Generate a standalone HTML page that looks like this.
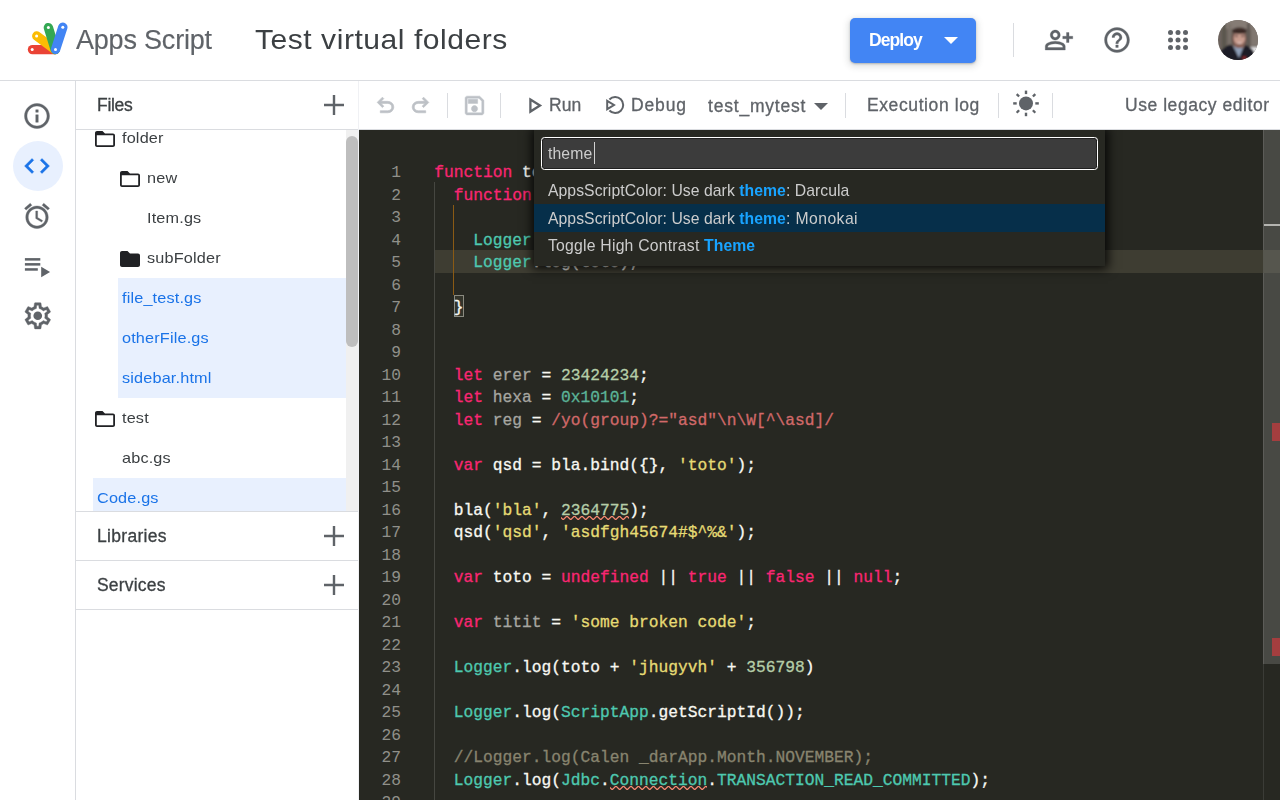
<!DOCTYPE html>
<html><head><meta charset="utf-8"><title>Test virtual folders - Apps Script</title>
<style>
*{box-sizing:border-box;margin:0;padding:0}
html,body{width:1280px;height:800px;overflow:hidden;background:#fff;font-family:"Liberation Sans",sans-serif;color:#3c4043}
.abs{position:absolute}
#hdr{position:absolute;left:0;top:0;width:1280px;height:80px;background:#fff}
#hdr .t,#files .t,#tb .t,#pal .t{will-change:transform}
#hline{position:absolute;left:0;top:80px;width:1280px;height:1px;background:#dadce0}
.t{position:absolute;white-space:nowrap;line-height:1}
svg{position:absolute;overflow:visible}
#nav{position:absolute;left:0;top:81px;width:75px;height:719px;background:#fff}
#navline{position:absolute;left:75px;top:81px;width:1px;height:719px;background:#dadce0}
#files{position:absolute;left:76px;top:81px;width:282px;height:719px;background:#fff;overflow:hidden}
#filesline{position:absolute;left:358px;top:81px;width:1px;height:719px;background:#f0f1f4}
.sec{position:absolute;left:0;width:282px;height:1px;background:#dadce0}
.row{position:absolute;height:40px;font-size:15px;line-height:40px;white-space:nowrap;color:#3c4043;letter-spacing:.15px;transform:scaleX(1.083);transform-origin:0 0}
.hl{position:absolute;background:#e8f0fe;height:40px}
.blue{color:#1a73e8}
#tb{position:absolute;left:359px;top:81px;width:921px;height:48px;background:#fff}
#tbline{position:absolute;left:359px;top:129px;width:921px;height:1px;background:#dadce0}
.vd{position:absolute;width:1px;background:#dadce0}
.tt{font-size:17.5px;color:#5f6368;-webkit-text-stroke:.3px #5f6368}
#ed{position:absolute;left:359px;top:130px;width:921px;height:670px;background:#272822;overflow:hidden;font-family:"Liberation Mono",monospace;font-size:16.25px;color:#f8f8f2}
.ln{position:absolute;left:0;width:42px;text-align:right;color:#90908a;height:22.5px;line-height:22.5px;white-space:pre}
.cl{position:absolute;left:75.2px;height:22.5px;line-height:22.5px;white-space:pre;-webkit-text-stroke:.3px}
.k{color:#f92672}.s{color:#e6db74}.n{color:#b5cea8}.ty{color:#4ec9b0}.c{color:#88846f}.u{color:#a6a6a1}.re{color:#d16969}.hx{color:#5bb498}
.pr b{color:#18a3ff;font-weight:bold}
</style></head><body>
<div id="hdr">
<svg width="60" height="50" style="left:20px;top:15px" viewBox="20 15 60 50">
 <g fill="none" stroke-linecap="round" stroke-width="9.400" style="filter:blur(.35px)">
  <line x1="32.5" y1="49.6" x2="55" y2="49.6" stroke="#ea4335"/>
  <line x1="36.8" y1="36" x2="55" y2="49.6" stroke="#fbbc04"/>
  <line x1="48.4" y1="27.6" x2="55.2" y2="49.6" stroke="#34a853"/>
  <line x1="62.8" y1="27.2" x2="55.6" y2="49.4" stroke="#4285f4"/>
 </g>
 <g fill="#fff"><circle cx="32.2" cy="49.6" r="1.5"/><circle cx="36.6" cy="36" r="1.5"/><circle cx="48.4" cy="27.6" r="1.5"/><circle cx="62.8" cy="27.3" r="1.5"/><circle cx="55.5" cy="49.5" r="1.5"/></g>
</svg>
<div class="t" id="t_apps" style="left:76px;top:27px;font-size:27px;color:#5f6368;letter-spacing:-0.2px;-webkit-text-stroke:.15px">Apps Script</div>
<div class="t" id="t_title" style="left:254.500px;top:25px;font-size:28.300px;color:#3c4043;letter-spacing:.5px;transform:scaleX(1.062);transform-origin:0 0">Test virtual folders</div>
<div class="abs" id="deploy" style="left:850px;top:18px;width:126px;height:45px;border-radius:5px;background:#4285f4;box-shadow:0 1px 2px rgba(60,64,67,.3),0 2px 6px 2px rgba(60,64,67,.15)"></div>
<div class="t" id="t_deploy" style="left:869px;top:31.600px;font-size:17.5px;font-weight:bold;color:#fff;letter-spacing:-0.9px">Deploy</div>
<svg width="14" height="7" style="left:943.5px;top:37px" viewBox="0 0 14 7"><path d="M0 0h14L7 7z" fill="#fff"/></svg>
<div class="vd" style="left:1013px;top:23px;height:34px"></div>
<svg width="30" height="30" style="left:1044px;top:25px" viewBox="0 0 24 24"><path fill="#5f6368" stroke="#5f6368" stroke-width=".25" d="M20 9V6h-2v3h-3v2h3v3h2v-3h3V9h-3zM9 12c2.21 0 4-1.79 4-4s-1.79-4-4-4-4 1.79-4 4 1.79 4 4 4zm0-6c1.1 0 2 .9 2 2s-.9 2-2 2-2-.9-2-2 .9-2 2-2zm6.39 8.56C13.71 13.7 11.53 13 9 13s-4.71.7-6.39 1.56C1.61 15.07 1 16.1 1 17.22V20h16v-2.78c0-1.12-.61-2.15-1.61-2.66zM15 18H3v-.78c0-.38.2-.72.52-.88C4.71 15.73 6.63 15 9 15c2.37 0 4.29.73 5.48 1.34.32.16.52.5.52.88V18z"/></svg>
<svg width="30" height="30" style="left:1102px;top:25px" viewBox="0 0 24 24"><path fill="#5f6368" stroke="#5f6368" stroke-width=".25" d="M11 18h2v-2h-2v2zm1-16C6.48 2 2 6.48 2 12s4.48 10 10 10 10-4.48 10-10S17.52 2 12 2zm0 18c-4.41 0-8-3.59-8-8s3.59-8 8-8 8 3.59 8 8-3.59 8-8 8zm0-14c-2.21 0-4 1.79-4 4h2c0-1.1.9-2 2-2s2 .9 2 2c0 2-3 1.75-3 5h2c0-2.25 3-2.5 3-5 0-2.21-1.79-4-4-4z"/></svg>
<svg width="30" height="30" style="left:1163px;top:25px" viewBox="0 0 24 24"><g fill="#5f6368"><circle cx="6" cy="6" r="2"/><circle cx="12" cy="6" r="2"/><circle cx="18" cy="6" r="2"/><circle cx="6" cy="12" r="2"/><circle cx="12" cy="12" r="2"/><circle cx="18" cy="12" r="2"/><circle cx="6" cy="18" r="2"/><circle cx="12" cy="18" r="2"/><circle cx="18" cy="18" r="2"/></g></svg>
<svg width="40" height="40" style="left:1218px;top:20px" viewBox="0 0 40 40">
 <defs><clipPath id="av"><circle cx="20" cy="20" r="20"/></clipPath>
 <filter id="bl" x="-20%" y="-20%" width="140%" height="140%"><feGaussianBlur stdDeviation="1"/></filter></defs>
 <g clip-path="url(#av)"><rect width="40" height="40" fill="#6b625c"/>
 <g filter="url(#bl)">
  <rect x="-4" y="-4" width="48" height="13" fill="#857b74"/>
  <rect x="4" y="2" width="4" height="26" fill="#5a574d"/>
  <rect x="10" y="4" width="3" height="22" fill="#7a726b"/>
  <rect x="29" y="3" width="3" height="24" fill="#5f5952"/>
  <rect x="33" y="6" width="8" height="20" fill="#80776f"/>
  <rect x="30" y="27" width="12" height="7" fill="#e6e6e8"/>
  <path d="M1 42 L3 31 Q8 25 13 24.500 L21 34 L27.500 25 Q34 27 36.500 33 L39 44 Z" fill="#1e1b25"/>
  <path d="M15.500 26.500 L21 38 L25.500 26.500z" fill="#8e9fb8"/>
  <ellipse cx="21.200" cy="18.500" rx="7.200" ry="9.300" fill="#6a4a42"/>
  <ellipse cx="21.400" cy="18.200" rx="5.800" ry="7.200" fill="#c89c8e"/>
  <ellipse cx="21.300" cy="25.500" rx="4.600" ry="2.600" fill="#8a6256"/>
  <ellipse cx="21.500" cy="23" rx="2.400" ry="1" fill="#e0c4bc"/>
  <ellipse cx="21.500" cy="10.800" rx="7.300" ry="3.300" fill="#3a2a27"/>
  <rect x="17" y="15.500" width="3" height="1.200" fill="#4a3530"/><rect x="23" y="15.500" width="3" height="1.200" fill="#4a3530"/>
  <rect x="24.500" y="36.500" width="3.500" height="3" fill="#8e2a2a"/>
 </g></g>
</svg>
</div><div id="hline"></div>
<div id="nav">
<div class="abs" style="left:13px;top:60px;width:50px;height:50px;border-radius:25px;background:#e8f0fe"></div>
<svg width="30" height="30" style="left:22.100px;top:20px" viewBox="0 0 24 24"><path fill="#5f6368" stroke="#5f6368" stroke-width=".3" d="M11 7h2v2h-2zm0 4h2v6h-2zm1-9C6.48 2 2 6.48 2 12s4.48 10 10 10 10-4.48 10-10S17.52 2 12 2zm0 18c-4.41 0-8-3.590-8-8s3.590-8 8-8 8 3.590 8 8-3.590 8-8 8z"/></svg>
<svg width="30" height="30" style="left:22.300px;top:70px" viewBox="0 0 24 24"><path fill="#1a73e8" stroke="#1a73e8" stroke-width=".3" d="M9.4 16.6L4.8 12l4.6-4.6L8 6l-6 6 6 6 1.4-1.4zm5.200 0l4.600-4.600-4.600-4.600L16 6l6 6-6 6-1.400-1.400z"/></svg>
<svg width="30" height="30" style="left:22.300px;top:120px" viewBox="0 0 24 24"><path fill="#5f6368" stroke="#5f6368" stroke-width=".3" d="M22 5.72l-4.6-3.86-1.29 1.53 4.6 3.86L22 5.72zM7.88 3.39L6.6 1.86 2 5.71l1.29 1.53 4.59-3.85zM12.5 8H11v6l4.75 2.850.750-1.230-4-2.370V8zM12 4c-4.970 0-9 4.030-9 9s4.020 9 9 9c4.970 0 9-4.030 9-9s-4.030-9-9-9zm0 16c-3.870 0-7-3.130-7-7s3.130-7 7-7 7 3.130 7 7-3.130 7-7 7z"/></svg>
<svg width="30" height="24" style="left:24px;top:175px" viewBox="24 256 30 24"><g fill="#5f6368"><rect x="24.9" y="258.100" width="15.400" height="2.500"/><rect x="24.900" y="263.100" width="15.400" height="2.500"/><rect x="24.900" y="268.200" width="12.900" height="2.500"/><path d="M41.200 266.800v10.400l8.900-5.200z"/></g></svg>
<svg width="31.500" height="31.500" style="left:21.900px;top:219.300px" viewBox="0 0 24 24"><path fill="#5f6368" stroke="#5f6368" stroke-width=".3" d="M19.43 12.98c.04-.32.07-.64.07-.98 0-.34-.03-.66-.07-.98l2.11-1.65c.19-.15.24-.42.12-.64l-2-3.46c-.09-.16-.26-.25-.44-.25-.06 0-.12.01-.17.03l-2.49 1c-.52-.4-1.08-.73-1.69-.98l-.38-2.65C14.46 2.18 14.25 2 14 2h-4c-.25 0-.46.18-.49.42l-.38 2.65c-.61.25-1.17.59-1.69.98l-2.49-1c-.06-.02-.12-.03-.18-.03-.17 0-.34.09-.43.25l-2 3.46c-.13.22-.07.49.12.64l2.11 1.65c-.04.32-.07.65-.07.98 0 .33.03.66.07.98l-2.11 1.65c-.19.15-.24.42-.12.64l2 3.46c.09.16.26.25.44.25.06 0 .12-.01.17-.03l2.49-1c.52.4 1.08.73 1.69.98l.38 2.65c.03.24.24.42.49.42h4c.25 0 .46-.18.49-.42l.38-2.65c.61-.25 1.17-.59 1.69-.98l2.49 1c.06.02.12.03.18.03.17 0 .34-.09.43-.25l2-3.46c.12-.22.07-.49-.12-.64l-2.11-1.65zm-1.98-1.71c.04.31.05.52.05.73 0 .21-.02.43-.05.73l-.14 1.13.89.7 1.08.84-.7 1.21-1.27-.51-1.04-.42-.9.68c-.43.32-.84.56-1.25.73l-1.06.43-.16 1.13-.2 1.35h-1.4l-.19-1.35-.16-1.13-1.06-.43c-.43-.18-.83-.41-1.23-.71l-.91-.7-1.06.43-1.27.51-.7-1.21 1.08-.84.89-.7-.14-1.13c-.03-.31-.05-.54-.05-.74s.02-.43.05-.73l.14-1.13-.89-.7-1.08-.84.7-1.21 1.27.51 1.04.42.9-.68c.43-.32.84-.56 1.25-.73l1.06-.43.16-1.13.2-1.35h1.39l.19 1.35.16 1.13 1.06.43c.43.18.83.41 1.23.71l.91.7 1.06-.43 1.27-.51.7 1.21-1.07.85-.89.7.14 1.13z"/><circle cx="12" cy="12" r="3.300" fill="#5f6368"/></svg>
</div><div id="navline"></div>
<div id="files">
<div class="hl" style="left:42px;top:197px;width:228px;height:120px"></div>
<div class="hl" style="left:17px;top:397px;width:253px;height:40px"></div>
<svg width="20" height="16" style="left:19px;top:49.6px" viewBox="0 0 20 16"><path fill="#202124" d="M7.5 0l2.500 2.500h8c1.100 0 2 .9 2 2V14c0 1.100-.9 2-2 2H2c-1.100 0-2-.9-2-2V2C0 .9.900 0 2 0h5.500zM1.800 4.300V14.200h16.400V4.300H1.800z"/></svg>
<div class="row" id="r0" style="left:46px;top:37.1px">folder</div>
<svg width="20" height="16" style="left:44px;top:89.6px" viewBox="0 0 20 16"><path fill="#202124" d="M7.5 0l2.500 2.500h8c1.100 0 2 .9 2 2V14c0 1.100-.9 2-2 2H2c-1.100 0-2-.9-2-2V2C0 .9.900 0 2 0h5.500zM1.800 4.300V14.200h16.400V4.300H1.800z"/></svg>
<div class="row" id="r1" style="left:71px;top:77.1px">new</div>
<div class="row" id="r2" style="left:71.3px;top:117.1px">Item.gs</div>
<svg width="20" height="16" style="left:44px;top:169.6px" viewBox="0 0 20 16"><path fill="#202124" d="M7.5 0l2.500 2.500h8c1.100 0 2 .9 2 2V14c0 1.100-.9 2-2 2H2c-1.100 0-2-.9-2-2V2C0 .9.900 0 2 0h5.500z"/></svg>
<div class="row" id="r3" style="left:71px;top:157.1px">subFolder</div>
<div class="row blue" id="r4" style="left:46.3px;top:197.1px">file_test.gs</div>
<div class="row blue" id="r5" style="left:46.3px;top:237.1px">otherFile.gs</div>
<div class="row blue" id="r6" style="left:46.3px;top:277.1px">sidebar.html</div>
<svg width="20" height="16" style="left:19px;top:329.6px" viewBox="0 0 20 16"><path fill="#202124" d="M7.5 0l2.500 2.500h8c1.100 0 2 .9 2 2V14c0 1.100-.9 2-2 2H2c-1.100 0-2-.9-2-2V2C0 .9.900 0 2 0h5.500zM1.800 4.300V14.200h16.400V4.300H1.800z"/></svg>
<div class="row" id="r7" style="left:46px;top:317.1px">test</div>
<div class="row" id="r8" style="left:46.3px;top:357.1px">abc.gs</div>
<div class="row blue" id="r9" style="left:21.3px;top:397.1px">Code.gs</div>
<div class="abs" style="left:270px;top:49px;width:12px;height:382px;background:#f0f0f0"></div>
<div class="abs" style="left:270px;top:55px;width:12px;height:211px;border-radius:6px;background:#bebebe"></div>
<div class="abs" style="left:0;top:0;width:282px;height:48px;background:#fff"></div>
<div class="sec" style="top:48px"></div>
<div class="abs" style="left:0;top:430px;width:282px;height:289px;background:#fff"></div>
<div class="sec" style="top:430px"></div><div class="sec" style="top:479px"></div><div class="sec" style="top:528px"></div>
<div class="t" id="t_files" style="left:21px;top:15.5px;font-size:17.5px;color:#3c4043;letter-spacing:-.3px;-webkit-text-stroke:.3px">Files</div>
<div class="t" id="t_libs" style="left:20.5px;top:446.500px;font-size:17.5px;color:#3c4043;letter-spacing:.3px;-webkit-text-stroke:.3px">Libraries</div>
<div class="t" id="t_serv" style="left:21px;top:495.500px;font-size:17.5px;color:#3c4043;letter-spacing:.2px;-webkit-text-stroke:.3px">Services</div>
<svg width="20" height="20" style="left:248px;top:14px" viewBox="0 0 20 20"><path d="M10 0v20M0 10h20" stroke="#5f6368" stroke-width="2.4" fill="none"/></svg><svg width="20" height="20" style="left:248px;top:445px" viewBox="0 0 20 20"><path d="M10 0v20M0 10h20" stroke="#5f6368" stroke-width="2.4" fill="none"/></svg><svg width="20" height="20" style="left:248px;top:494px" viewBox="0 0 20 20"><path d="M10 0v20M0 10h20" stroke="#5f6368" stroke-width="2.4" fill="none"/></svg>
</div><div id="filesline"></div>
<div id="tb">
<svg width="25" height="25" style="left:13.5px;top:11.5px" viewBox="0 0 24 24"><path fill="#bdc1c6" stroke="#bdc1c6" stroke-width=".6" d="M7 19v-2h7.1q1.575 0 2.738-1T18 13.5 16.837 11 14.1 10H7.8l2.6 2.6L9 14 4 9l5-5 1.4 1.4L7.8 8h6.3q2.425 0 4.163 1.575T20 13.5t-1.738 3.925T14.1 19z"/></svg>
<svg width="25" height="25" style="left:48.60000000000002px;top:11.5px" viewBox="0 0 24 24"><path fill="#bdc1c6" stroke="#bdc1c6" stroke-width=".6" transform="translate(24 0) scale(-1 1)" d="M7 19v-2h7.1q1.575 0 2.738-1T18 13.5 16.837 11 14.1 10H7.8l2.6 2.6L9 14 4 9l5-5 1.4 1.4L7.8 8h6.3q2.425 0 4.163 1.575T20 13.5t-1.738 3.925T14.1 19z"/></svg>
<div class="vd" style="left:88px;top:12px;height:25px"></div>
<svg width="25" height="25" style="left:103px;top:12px" viewBox="0 0 24 24"><path fill="#bdc1c6" stroke="#bdc1c6" stroke-width=".45" d="M17 3H5c-1.110 0-2 .9-2 2v14c0 1.100.89 2 2 2h14c1.100 0 2-.9 2-2V7l-4-4zm2 16H5V5h11.170L19 7.830V19zm-7-7c-1.660 0-3 1.340-3 3s1.340 3 3 3 3-1.340 3-3-1.340-3-3-3zM6 6h9v4H6z"/></svg>
<div class="vd" style="left:141px;top:12px;height:25px"></div>
<svg width="14" height="16" style="left:170px;top:16px" viewBox="0 -0.600 14 16"><path fill="none" stroke="#5f6368" stroke-width="2.300" stroke-linejoin="miter" d="M1.400 2L11 8l-9.600 6z"/></svg>
<div class="t tt" id="t_run" style="left:189.5px;top:16.400px;letter-spacing:.1px">Run</div>
<svg width="22" height="22" style="left:246px;top:12.800px" viewBox="0 0 22 22"><g fill="none" stroke="#5f6368" stroke-width="2"><path d="M4.400 5.500A8 8 0 1 1 4.400 16.500"/><path d="M2.200 6.800L9 11l-6.800 4.200z" stroke-linejoin="miter"/></g></svg>
<div class="t tt" id="t_debug" style="left:271.5px;top:16.400px;letter-spacing:.85px">Debug</div>
<div class="t tt" id="t_fn" style="left:349px;top:16.500px;letter-spacing:.8px">test_mytest</div>
<svg width="14" height="7" style="left:455px;top:22px" viewBox="0 0 14 7"><path d="M0 0h14L7 7z" fill="#5f6368"/></svg>
<div class="vd" style="left:486px;top:12px;height:25px"></div>
<div class="t tt" id="t_exec" style="left:507.5px;top:16.400px;letter-spacing:.6px">Execution log</div>
<div class="vd" style="left:639px;top:12px;height:25px"></div>
<svg width="30" height="30" style="left:651.8px;top:7px" viewBox="0 -0.400 30 30"><g fill="#5f6368"><circle cx="15" cy="15" r="7"/><rect x="13.800" y="2.200" width="2.400" height="3.500"/><rect x="13.800" y="24.300" width="2.400" height="3.500"/><rect x="2.200" y="13.800" width="3.500" height="2.400"/><rect x="24.300" y="13.800" width="3.500" height="2.400"/><rect x="5.20" y="5.75" width="3.400" height="2.300" transform="rotate(45 6.9 6.9)"/><rect x="21.40" y="5.75" width="3.400" height="2.300" transform="rotate(-45 23.1 6.9)"/><rect x="5.20" y="21.95" width="3.400" height="2.300" transform="rotate(-45 6.9 23.1)"/><rect x="21.40" y="21.95" width="3.400" height="2.300" transform="rotate(45 23.1 23.1)"/></g></svg>
<div class="vd" style="left:693px;top:12px;height:25px"></div>
<div class="t tt" id="t_legacy" style="left:765.5px;top:16.400px;letter-spacing:.55px">Use legacy editor</div>
</div><div id="tbline"></div>
<div id="ed">
<div class="abs" style="left:75px;top:119.75px;width:846px;height:23px;background:#3e3d32"></div>
<div class="abs" style="left:75px;top:52.25px;width:1px;height:640px;background:#464741"></div>
<div class="abs" style="left:94px;top:74.75px;width:1px;height:90px;background:#8a5a14"></div>
<div class="abs" style="left:95px;top:164.75px;width:9.5px;height:22.5px;border:1px solid #8a8a80;background:#33342b"></div>
<div class="ln" style="top:32.15px">1</div><div class="cl" style="top:32.15px"><span class="k">function</span> test_mytest() {</div>
<div class="ln" style="top:54.65px">2</div><div class="cl" style="top:54.65px">  <span class="k">function</span> inner(toto) {</div>
<div class="ln" style="top:77.15px">3</div><div class="cl" style="top:77.15px"></div>
<div class="ln" style="top:99.65px">4</div><div class="cl" style="top:99.65px">    <span class="ty">Logger</span>.log(toto);</div>
<div class="ln" style="top:122.15px">5</div><div class="cl" style="top:122.15px">    <span class="ty">Logger</span>.log(toto);</div>
<div class="ln" style="top:144.65px">6</div><div class="cl" style="top:144.65px"></div>
<div class="ln" style="top:167.15px">7</div><div class="cl" style="top:167.15px">  }</div>
<div class="ln" style="top:189.65px">8</div><div class="cl" style="top:189.65px"></div>
<div class="ln" style="top:212.15px">9</div><div class="cl" style="top:212.15px"></div>
<div class="ln" style="top:234.65px">10</div><div class="cl" style="top:234.65px">  <span class="k">let</span> <span class="u">erer</span> = <span class="n">23424234</span>;</div>
<div class="ln" style="top:257.15px">11</div><div class="cl" style="top:257.15px">  <span class="k">let</span> <span class="u">hexa</span> = <span class="hx">0x10101</span>;</div>
<div class="ln" style="top:279.65px">12</div><div class="cl" style="top:279.65px">  <span class="k">let</span> <span class="u">reg</span> = <span class="re">/yo(group)?="asd"\n\W[^\asd]/</span></div>
<div class="ln" style="top:302.15px">13</div><div class="cl" style="top:302.15px"></div>
<div class="ln" style="top:324.65px">14</div><div class="cl" style="top:324.65px">  <span class="k">var</span> qsd = bla.bind({}, <span class="s">'toto'</span>);</div>
<div class="ln" style="top:347.15px">15</div><div class="cl" style="top:347.15px"></div>
<div class="ln" style="top:369.65px">16</div><div class="cl" style="top:369.65px">  bla(<span class="s">'bla'</span>, <span class="n">2364775</span>);</div>
<div class="ln" style="top:392.15px">17</div><div class="cl" style="top:392.15px">  qsd(<span class="s">'qsd'</span>, <span class="s">'asdfgh45674#$^%&amp;'</span>);</div>
<div class="ln" style="top:414.65px">18</div><div class="cl" style="top:414.65px"></div>
<div class="ln" style="top:437.15px">19</div><div class="cl" style="top:437.15px">  <span class="k">var</span> toto = <span class="k">undefined</span> || <span class="k">true</span> || <span class="k">false</span> || <span class="k">null</span>;</div>
<div class="ln" style="top:459.65px">20</div><div class="cl" style="top:459.65px"></div>
<div class="ln" style="top:482.15px">21</div><div class="cl" style="top:482.15px">  <span class="k">var</span> <span class="u">titit</span> = <span class="s">'some broken code'</span>;</div>
<div class="ln" style="top:504.65px">22</div><div class="cl" style="top:504.65px"></div>
<div class="ln" style="top:527.15px">23</div><div class="cl" style="top:527.15px">  <span class="ty">Logger</span>.log(toto + <span class="s">'jhugyvh'</span> + <span class="n">356798</span>)</div>
<div class="ln" style="top:549.65px">24</div><div class="cl" style="top:549.65px"></div>
<div class="ln" style="top:572.15px">25</div><div class="cl" style="top:572.15px">  <span class="ty">Logger</span>.log(<span class="ty">ScriptApp</span>.getScriptId());</div>
<div class="ln" style="top:594.65px">26</div><div class="cl" style="top:594.65px"></div>
<div class="ln" style="top:617.15px">27</div><div class="cl" style="top:617.15px">  <span class="c">//Logger.log(Calen _darApp.Month.NOVEMBER);</span></div>
<div class="ln" style="top:639.65px">28</div><div class="cl" style="top:639.65px">  <span class="ty">Logger</span>.log(<span class="ty">Jdbc</span>.<span class="ty">Connection</span>.<span class="ty">TRANSACTION_READ_COMMITTED</span>);</div>
<div class="ln" style="top:662.15px">29</div><div class="cl" style="top:662.15px"></div>
<svg width="68.25" height="3.75" style="left:201.95px;top:386.00px;overflow:hidden" viewBox="0 0 68.25 3.75"><polyline fill="none" stroke="#f48771" stroke-width="1.25" points="-5.31,3.75 -1.56,0 2.19,3.75 5.94,0 9.69,3.75 13.44,0 17.19,3.75 20.94,0 24.69,3.75 28.44,0 32.19,3.75 35.94,0 39.69,3.75 43.44,0 47.19,3.75 50.94,0 54.69,3.75 58.44,0 62.19,3.75 65.94,0 69.69,3.75 73.44,0"/></svg>
<svg width="97.50" height="3.75" style="left:250.70px;top:656.00px;overflow:hidden" viewBox="0 0 97.50 3.75"><polyline fill="none" stroke="#f48771" stroke-width="1.25" points="-5.31,3.75 -1.56,0 2.19,3.75 5.94,0 9.69,3.75 13.44,0 17.19,3.75 20.94,0 24.69,3.75 28.44,0 32.19,3.75 35.94,0 39.69,3.75 43.44,0 47.19,3.75 50.94,0 54.69,3.75 58.44,0 62.19,3.75 65.94,0 69.69,3.75 73.44,0 77.19,3.75 80.94,0 84.69,3.75 88.44,0 92.19,3.75 95.94,0 99.69,3.75 103.44,0"/></svg>
<div class="abs" style="left:904px;top:0;width:1px;height:670px;background:#3b3c37"></div>
<div class="abs" style="left:904px;top:0;width:1px;height:534px;background:#5c5c58"></div>
<div class="abs" style="left:905px;top:0;width:16px;height:534px;background:#484944"></div>
<div class="abs" style="left:904px;top:119.75px;width:17px;height:23px;background:#56564e"></div>
<div class="abs" style="left:905px;top:94px;width:16px;height:2.4px;background:#b4b4b0"></div>
<div class="abs" style="left:913px;top:293px;width:8px;height:18px;background:#a43e3f"></div>
<div class="abs" style="left:913px;top:508px;width:8px;height:18px;background:#a43e3f"></div>
<div id="pal" class="abs" style="left:175px;top:0;width:571px;height:136px;background:#272822;box-shadow:0 0 10px 2.5px rgba(0,0,0,.85);font-family:'Liberation Sans',sans-serif;font-size:15.75px;letter-spacing:.05px;color:#cccccc">
<div class="abs" style="left:7px;top:7px;width:557px;height:33px;border:1.300px solid #fff;border-radius:3.500px;background:#3c3c3c;box-shadow:inset 0 0 0 1px #202020"></div>
<div class="t" id="t_theme" style="left:14px;top:16px;font-size:15.750px;letter-spacing:.1px">theme</div>
<div class="abs" style="left:60px;top:12px;width:1px;height:22px;background:#d0d0d0"></div>
<div class="abs" style="left:0;top:74px;width:571px;height:27.5px;background:#062f4a"></div>
<div class="t pr" id="p1" style="left:14px;top:47.100px;height:27.5px;line-height:27.5px"><span id="p1a">AppsScriptColor: Use dark </span><b id="p1b">theme</b><span id="p1c">: Darcula</span></div>
<div class="t pr" id="p2" style="left:14px;top:74.600px;height:27.5px;line-height:27.5px"><span id="p2a">AppsScriptColor: Use dark </span><b id="p2b">theme</b><span id="p2c" style="letter-spacing:.43px">: Monokai</span></div>
<div class="t pr" id="p3" style="left:14px;top:102.100px;height:27.5px;line-height:27.5px"><span id="p3a" style="letter-spacing:.22px">Toggle High Contrast </span><b id="p3b">Theme</b></div>
</div>
</div>
</body></html>
